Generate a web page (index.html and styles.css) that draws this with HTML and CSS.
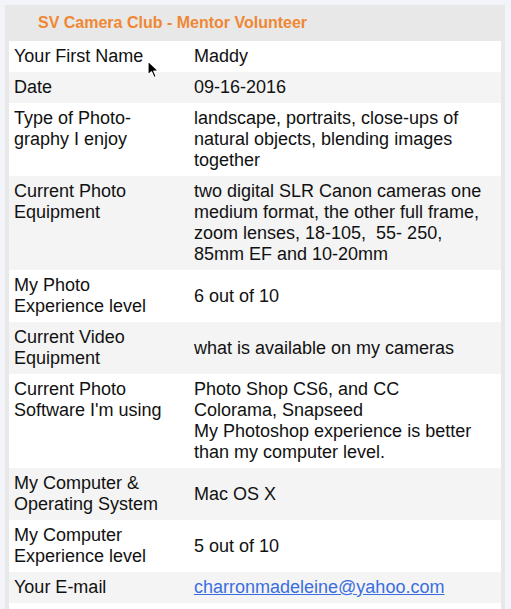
FILE: index.html
```html
<!DOCTYPE html>
<html>
<head>
<meta charset="utf-8">
<link rel="stylesheet" href="styles.css">
</head>
<body>
<div class="panel">
  <div class="panel-header">SV Camera Club - Mentor Volunteer</div>
  <table class="info">
    <tr><td class="label">Your First Name</td><td class="value">Maddy</td></tr>
    <tr><td class="label">Date</td><td class="value">09-16-2016</td></tr>
    <tr><td class="label">Type of Photo-<br>graphy I enjoy</td><td class="value">landscape, portraits, close-ups of natural objects, blending images together</td></tr>
    <tr><td class="label">Current Photo Equipment</td><td class="value">two digital SLR Canon cameras one medium format, the other full frame, zoom lenses, 18-105,&nbsp; 55- 250, 85mm EF and 10-20mm</td></tr>
    <tr><td class="label">My Photo<br>Experience level</td><td class="value">6 out of 10</td></tr>
    <tr><td class="label">Current Video<br>Equipment</td><td class="value">what is available on my cameras</td></tr>
    <tr><td class="label">Current Photo<br>Software I'm using</td><td class="value">Photo Shop CS6, and CC<br>Colorama, Snapseed<br>My Photoshop experience is better than my computer level.</td></tr>
    <tr><td class="label">My Computer &amp;<br>Operating System</td><td class="value">Mac OS X</td></tr>
    <tr><td class="label">My Computer<br>Experience level</td><td class="value">5 out of 10</td></tr>
    <tr><td class="label">Your E-mail</td><td class="value"><a href="#" class="mail">charronmadeleine@yahoo.com</a></td></tr>
    <tr><td class="label">&nbsp;</td><td class="value">&nbsp;</td></tr>
  </table>
</div>
<svg class="cursor" width="13" height="19" viewBox="0 0 13 19">
  <path d="M1 1 L1 15 L4.5 11.8 L7 17.5 L9.2 16.6 L6.8 11 L11.5 11 Z" fill="#000" stroke="#fff" stroke-width="1.2" stroke-linejoin="round"/>
</svg>
</body>
</html>
```
FILE: styles.css
```css
html, body {
  margin: 0;
  padding: 0;
  background: #f3f4f9;
  height: 609px;
  overflow: hidden;
}
body {
  position: relative;
  font-family: "Liberation Sans", Arial, sans-serif;
}
.panel {
  margin: 5px 0 0 5px;
  width: 492px;
  padding: 0 4px;
  background: #e8e8e8;
}
.panel-header {
  height: 36px;
  line-height: 36px;
  padding-left: 29px;
  color: #ef8733;
  font-weight: bold;
  font-size: 16px;
}
.info {
  width: 492px;
  border-collapse: collapse;
  font-size: 18px;
  color: #111;
}
.info td {
  padding: 5px 5px;
  line-height: 21px;
}
.info td.label { width: 170px; vertical-align: top; }
.info td.value { vertical-align: middle; }
.info tr:nth-child(odd) { background: #ffffff; }
.info tr:nth-child(even) { background: #f4f4f4; }
.mail { color: #3a6ee0; text-decoration: underline; }
.cursor {
  position: absolute;
  left: 147px;
  top: 60px;
}
```
